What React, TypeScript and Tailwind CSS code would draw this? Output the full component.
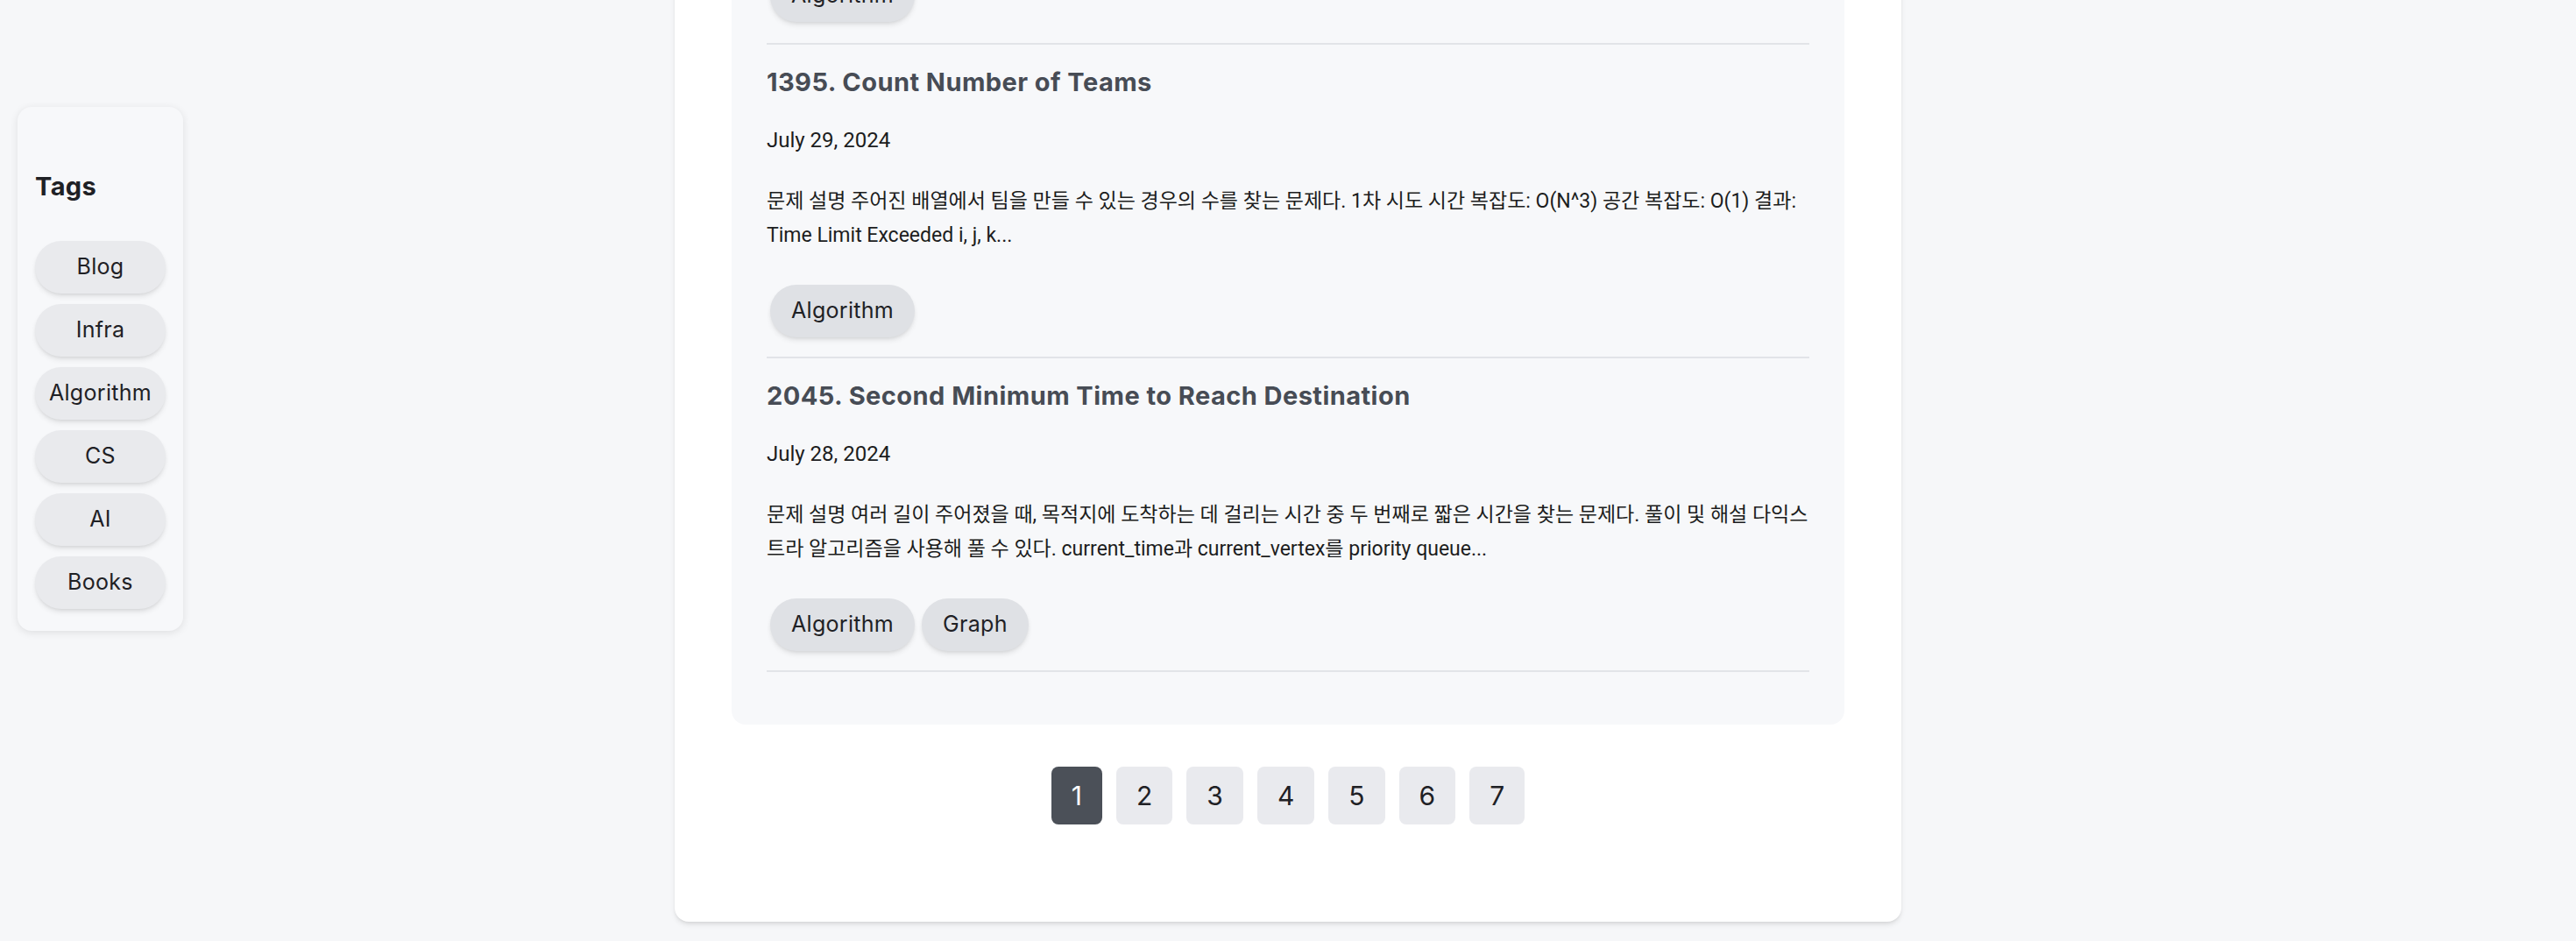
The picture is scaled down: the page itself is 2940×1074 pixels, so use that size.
const SIDEBAR_TAGS = ['Blog', 'Infra', 'Algorithm', 'CS', 'AI', 'Books']

const POSTS = [
  {
    title: '1395. Count Number of Teams',
    date: 'July 29, 2024',
    excerpt:
      '문제 설명 주어진 배열에서 팀을 만들 수 있는 경우의 수를 찾는 문제다. 1차 시도 시간 복잡도: O(N^3) 공간 복잡도: O(1) 결과: Time Limit Exceeded i, j, k...',
    tags: ['Algorithm'],
  },
  {
    title: '2045. Second Minimum Time to Reach Destination',
    date: 'July 28, 2024',
    excerpt:
      '문제 설명 여러 길이 주어졌을 때, 목적지에 도착하는 데 걸리는 시간 중 두 번째로 짧은 시간을 찾는 문제다. 풀이 및 해설 다익스트라 알고리즘을 사용해 풀 수 있다. current_time과 current_vertex를 priority queue...',
    tags: ['Algorithm', 'Graph'],
  },
]

const PAGES = [1, 2, 3, 4, 5, 6, 7]

function TagChip({ label }: { label: string }) {
  return (
    <span className="m-1 inline-flex h-[60px] items-center rounded-full bg-[#dfe1e5] px-6 text-[25px] tracking-[0.3px] text-[#1f2125] shadow-md">
      {label}
    </span>
  )
}

function TagRow({ tags }: { tags: string[] }) {
  return (
    <div className="flex flex-wrap">
      {tags.map(t => (
        <TagChip key={t} label={t} />
      ))}
    </div>
  )
}

function PostItem({ post }: { post: (typeof POSTS)[number] }) {
  return (
    <article className="border-b-2 border-[#e2e4e8] pt-[22px] pb-[18px]">
      <h2 className="text-[29px] leading-[42px] font-bold tracking-[0.45px] text-[#474c55]">{post.title}</h2>
      <p className="mt-[27px] font-[Roboto,'Noto_Sans_CJK_KR',sans-serif] text-[24px] leading-[36px] text-[#1c1d20]">
        {post.date}
      </p>
      <p className="mt-8 font-[Roboto,'Noto_Sans_CJK_KR',sans-serif] text-[23px] leading-[39px] text-[#1c1d20]">
        {post.excerpt}
      </p>
      <div className="mt-[33px]">
        <TagRow tags={post.tags} />
      </div>
    </article>
  )
}

export default function App() {
  return (
    <div className="h-[1074px] overflow-hidden bg-[#f6f7f9] font-[Inter,sans-serif] text-[#1f2125]">
      <div className="grid grid-cols-[1fr_1400px_1fr] items-start">
        {/* Tag sidebar */}
        <aside className="pt-[122px] pl-5">
          <div className="w-[189px] rounded-2xl bg-[#f7f8fa] px-5 pt-[70px] pb-[25px] shadow-[0_2px_10px_rgba(0,0,0,0.1)]">
            <h3 className="text-[29px] leading-[42px] font-bold tracking-[0.4px] text-[#1f2125]">Tags</h3>
            <div className="mt-[41px] flex flex-col gap-3">
              {SIDEBAR_TAGS.map(t => (
                <button
                  key={t}
                  className="h-[60px] w-full rounded-full bg-[#e9eaed] text-[25px] tracking-[0.3px] text-[#1f2125] shadow-md"
                >
                  {t}
                </button>
              ))}
            </div>
          </div>
        </aside>

        {/* Post list */}
        <main className="-mt-[39px] rounded-2xl bg-white px-[65px] pb-[111px] shadow-md">
          <div className="rounded-2xl bg-[#f7f8fa] px-10 pb-[60px]">
            {/* tail of the previous post */}
            <div className="border-b-2 border-[#e2e4e8] pb-5">
              <TagRow tags={['Algorithm']} />
            </div>
            {POSTS.map(p => (
              <PostItem key={p.title} post={p} />
            ))}
          </div>

          <nav className="mt-12 flex justify-center gap-4">
            {PAGES.map(n => (
              <button
                key={n}
                className={
                  n === 1
                    ? 'h-[66px] rounded-lg bg-[#4b5058] px-[23px] text-[30px] text-white'
                    : 'h-[66px] rounded-lg bg-[#e9eaee] px-[23px] text-[30px] text-[#1f2125]'
                }
              >
                {n}
              </button>
            ))}
          </nav>
        </main>
        <div />
      </div>
    </div>
  )
}
